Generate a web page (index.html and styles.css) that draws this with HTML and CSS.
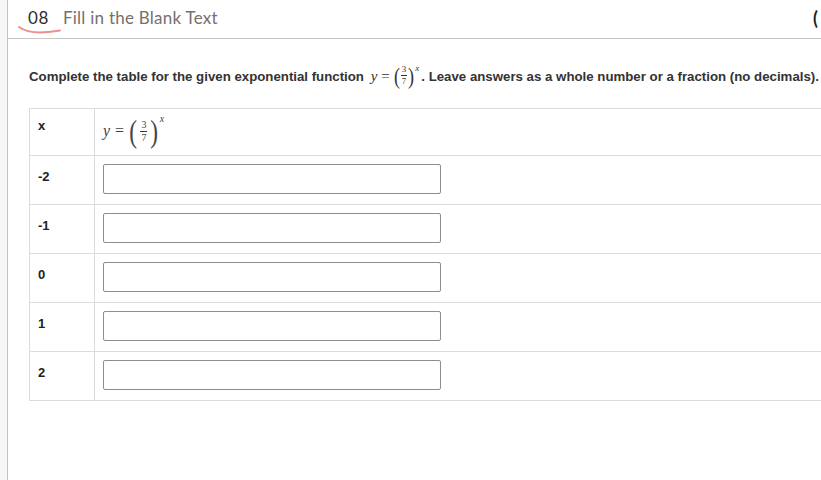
FILE: index.html
```html
<!DOCTYPE html>
<html>
<head>
<meta charset="utf-8">
<link rel="stylesheet" href="styles.css">
</head>
<body>
<div class="page">
  <div class="rail"></div>
  <div class="main">
    <div class="header">
      <span class="num">08</span>
      <span class="title">Fill in the Blank Text</span>
      <span class="edge">(</span>
      <svg class="squiggle" width="44" height="10" viewBox="0 0 44 10"><path d="M1 2 C8 7, 20 8, 30 7 C35 6.5, 39 6, 42 5.5" fill="none" stroke="#ec8f8f" stroke-width="2" stroke-linecap="round"/></svg>
    </div>
    <p class="question">Complete the table for the given exponential function <span class="math qmath"><span class="mi">y</span><span class="mo">=</span><span class="paren">(</span><span class="frac"><span class="fnum">3</span><span class="fden">7</span></span><span class="paren">)</span><span class="mi sup">x</span></span>. Leave answers as a whole number or a fraction (no decimals).</p>
    <div class="tablewrap">
      <table class="grid">
        <tr class="head">
          <td class="lab">x</td>
          <td class="val"><span class="math hmath"><span class="mi">y</span><span class="mo">=</span><span class="paren">(</span><span class="frac"><span class="fnum">3</span><span class="fden">7</span></span><span class="paren">)</span><span class="mi sup">x</span></span></td>
        </tr>
        <tr><td class="lab">-2</td><td class="val"><input type="text" class="ans"></td></tr>
        <tr><td class="lab">-1</td><td class="val"><input type="text" class="ans"></td></tr>
        <tr><td class="lab">0</td><td class="val"><input type="text" class="ans"></td></tr>
        <tr><td class="lab">1</td><td class="val"><input type="text" class="ans"></td></tr>
        <tr><td class="lab">2</td><td class="val"><input type="text" class="ans"></td></tr>
      </table>
    </div>
  </div>
</div>
</body>
</html>
```
FILE: styles.css
```css
html, body {
  margin: 0;
  padding: 0;
  background: #ffffff;
  overflow: hidden;
}
.page {
  display: flex;
  width: 821px;
  height: 480px;
}
.rail {
  width: 7px;
  flex: 0 0 7px;
  background: #f6f7f9;
  border-right: 1px solid #c4c4c4;
}
.main {
  flex: 1;
  min-width: 0;
  overflow: hidden;
}
.header {
  position: relative;
  height: 39px;
  border-bottom: 1px solid #c6c6c6;
  display: flex;
  align-items: center;
  padding-left: 20px;
  padding-bottom: 4px;
  box-sizing: border-box;
  font-family: Lato, "Open Sans", sans-serif;
  font-size: 17px;
  white-space: nowrap;
}
.num {
  color: #2e2e2e;
  margin-right: 14px;
  letter-spacing: 0.6px;
}
.title {
  color: #76706d;
  letter-spacing: 0.25px;
}
.edge {
  position: absolute;
  left: 805px;
  top: 7px;
  color: #222;
  font-size: 18px;
  font-weight: bold;
}
.squiggle {
  position: absolute;
  left: 10px;
  top: 25px;
}
.question {
  margin: 26px 0 0 21px;
  height: 24px;
  font-family: "Liberation Sans", Arial, sans-serif;
  font-weight: bold;
  font-size: 13.25px;
  color: #333;
  white-space: nowrap;
  line-height: 24px;
}
.math {
  font-family: "Liberation Serif", "Times New Roman", serif;
  font-weight: normal;
  white-space: nowrap;
  display: inline-flex;
  align-items: center;
  vertical-align: middle;
  color: #333;
}
.qmath {
  font-size: 15px;
  height: 24px;
  margin: 0 2px 0 3px;
  position: relative;
  top: -2px;
}
.mi {
  font-style: italic;
}
.mo {
  margin: 0 4px;
}
.paren {
  font-size: 24px;
  line-height: 1;
  display: inline-block;
  transform: scaleX(0.75);
  margin: 0 -1px;
}
.frac {
  display: inline-flex;
  flex-direction: column;
  align-items: center;
  font-size: 9px;
  line-height: 9px;
  margin: 0 1px;
}
.fnum {
  border-bottom: 1px solid #333;
  padding: 0 1px 1px;
}
.fden {
  padding-top: 1px;
}
.sup {
  font-size: 9px;
  align-self: flex-start;
  margin-left: 1px;
  line-height: 9px;
}
.tablewrap {
  margin: 19px 0 0 21px;
}
.grid {
  border-collapse: collapse;
  width: 830px;
  font-family: "Liberation Sans", Arial, sans-serif;
  font-size: 13px;
  color: #222;
}
.grid td {
  border: 1px solid #dcdcdc;
  padding: 8px;
  vertical-align: top;
}
.grid tr {
  height: 49px;
}
.grid tr.head {
  height: 47px;
}
.lab {
  width: 48px;
  font-weight: bold;
  padding-top: 13px !important;
  line-height: 16px;
}
.head .lab {
  padding-top: 9px !important;
}
.val {
  line-height: 16px;
}
.head .val {
  padding-top: 6px !important;
  padding-bottom: 0 !important;
}
.hmath {
  color: #444;
  font-size: 16px;
  height: 32px;
  vertical-align: top;
}
.hmath .mo {
  margin: 0 5px;
}
.hmath .paren {
  font-size: 31px;
}
.hmath .frac {
  font-size: 10px;
  line-height: 10px;
  margin: 0 3px;
}
.hmath .sup {
  font-size: 10px;
  margin-top: -1px;
}
.ans {
  display: block;
  width: 338px;
  height: 30px;
  box-sizing: border-box;
  border: 1px solid #8e8e8e;
  border-radius: 2px;
  margin: 0;
  padding: 0 6px;
  font-family: "Liberation Sans", Arial, sans-serif;
  font-size: 13px;
}
```
